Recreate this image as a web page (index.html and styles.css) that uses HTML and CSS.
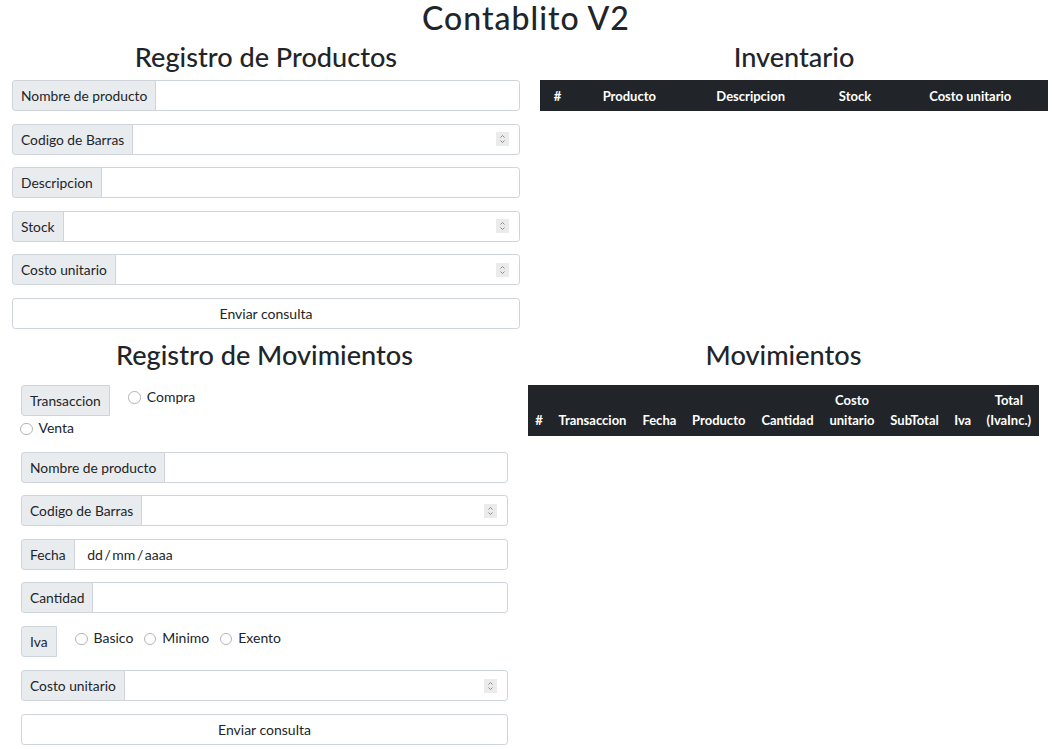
FILE: index.html
```html
<!DOCTYPE html>
<html lang="es">
<head>
<meta charset="utf-8">
<title>Contablito V2</title>
<link rel="stylesheet" href="styles.css">
</head>
<body>
<h1 class="title">Contablito V2</h1>

<div class="row row-top">
  <section class="col col-prod">
    <h2 class="sec-title">Registro de Productos</h2>
    <form class="form">
      <div class="group"><span class="addon">Nombre de producto</span><input class="field" type="text"></div>
      <div class="group"><span class="addon">Codigo de Barras</span><div class="field num"><input type="number"><span class="spin"><svg width="13" height="14" viewBox="0 0 13 14"><polyline points="4.5,5.5 6.5,3.5 8.5,5.5"/><polyline points="4.5,8.5 6.5,10.5 8.5,8.5"/></svg></span></div></div>
      <div class="group"><span class="addon">Descripcion</span><input class="field" type="text"></div>
      <div class="group"><span class="addon">Stock</span><div class="field num"><input type="number"><span class="spin"><svg width="13" height="14" viewBox="0 0 13 14"><polyline points="4.5,5.5 6.5,3.5 8.5,5.5"/><polyline points="4.5,8.5 6.5,10.5 8.5,8.5"/></svg></span></div></div>
      <div class="group"><span class="addon">Costo unitario</span><div class="field num"><input type="number"><span class="spin"><svg width="13" height="14" viewBox="0 0 13 14"><polyline points="4.5,5.5 6.5,3.5 8.5,5.5"/><polyline points="4.5,8.5 6.5,10.5 8.5,8.5"/></svg></span></div></div>
      <button class="submit" type="button">Enviar consulta</button>
    </form>
  </section>
  <section class="col col-inv">
    <h2 class="sec-title">Inventario</h2>
    <table class="tbl">
      <thead>
        <tr><th>#</th><th>Producto</th><th>Descripcion</th><th>Stock</th><th>Costo unitario</th></tr>
      </thead>
    </table>
  </section>
</div>

<div class="row row-bottom">
  <section class="col col-mov-form">
    <h2 class="sec-title">Registro de Movimientos</h2>
    <form class="form">
      <div class="choice-row trans">
        <span class="addon">Transaccion</span>
        <label class="opt opt-first"><input type="radio" name="trans"><span>Compra</span></label>
        <span class="break"></span>
        <label class="opt opt-wrap"><input type="radio" name="trans"><span>Venta</span></label>
      </div>
      <div class="group"><span class="addon">Nombre de producto</span><input class="field" type="text"></div>
      <div class="group"><span class="addon">Codigo de Barras</span><div class="field num"><input type="number"><span class="spin"><svg width="13" height="14" viewBox="0 0 13 14"><polyline points="4.5,5.5 6.5,3.5 8.5,5.5"/><polyline points="4.5,8.5 6.5,10.5 8.5,8.5"/></svg></span></div></div>
      <div class="group"><span class="addon">Fecha</span><input class="field field-date" type="text" placeholder="dd / mm / aaaa"></div>
      <div class="group"><span class="addon">Cantidad</span><input class="field" type="text"></div>
      <div class="choice-row iva">
        <span class="addon">Iva</span>
        <label class="opt opt-first"><input type="radio" name="iva"><span>Basico</span></label>
        <label class="opt"><input type="radio" name="iva"><span>Minimo</span></label>
        <label class="opt"><input type="radio" name="iva"><span>Exento</span></label>
      </div>
      <div class="group"><span class="addon">Costo unitario</span><div class="field num"><input type="number"><span class="spin"><svg width="13" height="14" viewBox="0 0 13 14"><polyline points="4.5,5.5 6.5,3.5 8.5,5.5"/><polyline points="4.5,8.5 6.5,10.5 8.5,8.5"/></svg></span></div></div>
      <button class="submit" type="button">Enviar consulta</button>
    </form>
  </section>
  <section class="col col-mov">
    <h2 class="sec-title">Movimientos</h2>
    <table class="tbl">
      <thead>
        <tr><th>#</th><th>Transaccion</th><th>Fecha</th><th>Producto</th><th>Cantidad</th><th>Costo<br>unitario</th><th>SubTotal</th><th>Iva</th><th>Total<br>(IvaInc.)</th></tr>
      </thead>
    </table>
  </section>
</div>
</body>
</html>
```

FILE: styles.css
```css
* {
  box-sizing: border-box;
}

body {
  margin: 0;
  font-family: Lato, "Noto Sans", sans-serif;
  color: #212529;
  background: #fff;
}

.title {
  margin: 0 0 5px;
  font-size: 32px;
  font-weight: 500;
  line-height: 36px;
  letter-spacing: 1px;
  text-align: center;
}

.row {
  display: flex;
  gap: 20px;
}

.row-top {
  padding-left: 12px;
}

.col-prod,
.col-inv {
  width: 508px;
}

.row-bottom {
  padding-left: 21px;
  margin-top: 10.5px;
}

.col-mov-form {
  width: 487px;
}

.col-mov {
  width: 511px;
}

.sec-title {
  margin: 0 0 7px;
  font-size: 27.12px;
  font-weight: 500;
  line-height: 32px;
  text-align: center;
}

.row-bottom .sec-title {
  margin-bottom: 13.5px;
}

.form {
  margin: 0;
}

.group {
  display: flex;
  height: 31px;
  margin-bottom: 12.5px;
}

.addon {
  display: flex;
  align-items: center;
  height: 31px;
  padding: 4px 8px;
  font-size: 13.8px;
  line-height: 21px;
  background: #e9ecef;
  border: 1px solid #ced4da;
  border-radius: 3.2px 0 0 3.2px;
  white-space: nowrap;
}

.field {
  flex: 1;
  min-width: 0;
  height: 31px;
  margin: 0 0 0 -1px;
  padding: 4px 8px;
  font-family: inherit;
  font-size: 14px;
  line-height: 21px;
  color: #212529;
  background: #fff;
  border: 1px solid #ced4da;
  border-radius: 0 3.2px 3.2px 0;
  outline: none;
}

.field.num {
  display: flex;
  align-items: center;
  padding-right: 10px;
}

.field.num input {
  flex: 1;
  min-width: 0;
  height: 100%;
  padding: 0;
  border: 0;
  outline: none;
  font-family: inherit;
  font-size: 14px;
  color: #212529;
  background: transparent;
  -moz-appearance: textfield;
}

.field.num input::-webkit-inner-spin-button,
.field.num input::-webkit-outer-spin-button {
  -webkit-appearance: none;
  margin: 0;
}

.spin {
  display: flex;
  width: 13px;
  height: 14px;
  background: #ebebeb;
}

.spin svg {
  display: block;
  fill: none;
  stroke: #8c8c8c;
  stroke-width: 1;
}

.field-date {
  padding-left: 12.5px;
  word-spacing: -2px;
}

.field-date::placeholder {
  color: #212529;
  opacity: 1;
}

.submit {
  display: block;
  width: 100%;
  height: 31px;
  padding: 4px 8px;
  font-family: inherit;
  font-size: 14px;
  line-height: 21px;
  color: #212529;
  background: #fff;
  border: 1px solid #ced4da;
  border-radius: 3.2px;
}

.choice-row {
  display: flex;
  flex-wrap: wrap;
  align-items: flex-start;
}

.choice-row.trans {
  margin-bottom: 14px;
}

.choice-row.iva {
  margin-bottom: 13.4px;
}

.break {
  flex-basis: 100%;
  height: 0;
}

.opt {
  display: flex;
  align-items: center;
  margin-top: 1px;
  margin-left: 5.5px;
  font-size: 14px;
  line-height: 21px;
}

.opt input {
  -webkit-appearance: none;
  appearance: none;
  width: 12.5px;
  height: 12.5px;
  margin: 3px 6px 0 5px;
  border: 1px solid #b5b5b5;
  border-radius: 50%;
  background: #fff;
}

.opt-first {
  margin-left: 13.5px;
}

.opt-wrap {
  margin-left: -6px;
  margin-top: 1.4px;
}

.tbl {
  width: 100%;
  border-collapse: collapse;
  background: #212529;
  color: #fff;
}

.tbl th {
  padding: 5.5px 7px;
  font-size: 13px;
  font-weight: 700;
  line-height: 20px;
  text-align: center;
  vertical-align: bottom;
  white-space: nowrap;
}
```
